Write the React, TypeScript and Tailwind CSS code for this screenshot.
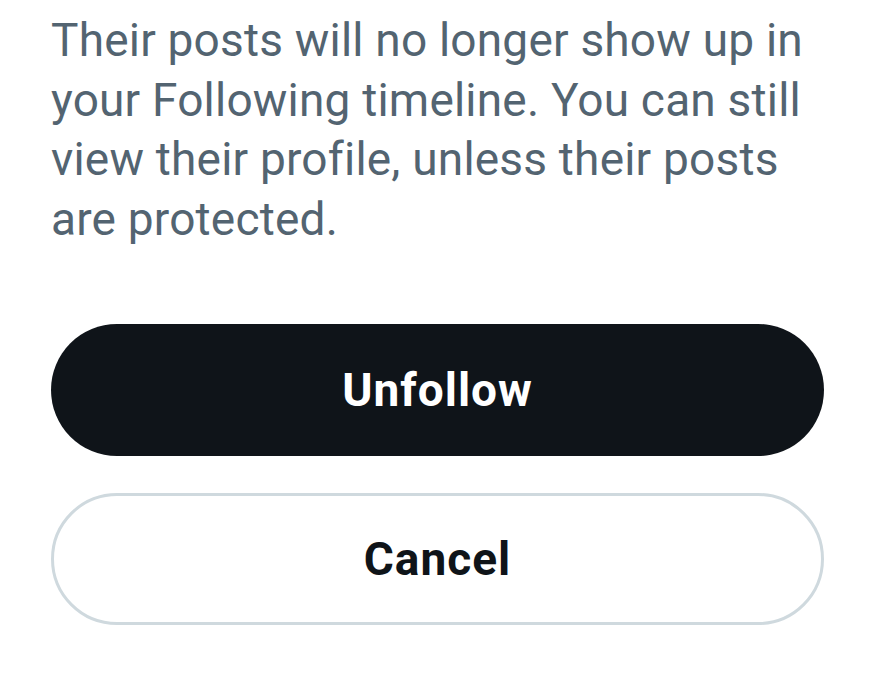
export default function App() {
  return (
    <div className="min-h-[673px] w-[887px] bg-white font-['Roboto',sans-serif] pl-[51px] pt-[11px]">
      <div className="w-[773px]">
        <p className="text-[46px] leading-[59.5px] tracking-[0.2px] text-[#536471]">
          Their posts will no longer show up in your Following timeline. You can still view their profile, unless their posts are protected.
        </p>
        <div className="mt-[75px] flex flex-col gap-[37px]">
          <button className="h-[132px] w-full rounded-full bg-[#0f1419] text-white text-[46px] font-bold tracking-[1px]">
            Unfollow
          </button>
          <button className="h-[132px] w-full rounded-full border-[3px] border-[#cfd9de] bg-white text-[#0f1419] text-[46px] font-bold tracking-[1px]">
            Cancel
          </button>
        </div>
      </div>
    </div>
  )
}
